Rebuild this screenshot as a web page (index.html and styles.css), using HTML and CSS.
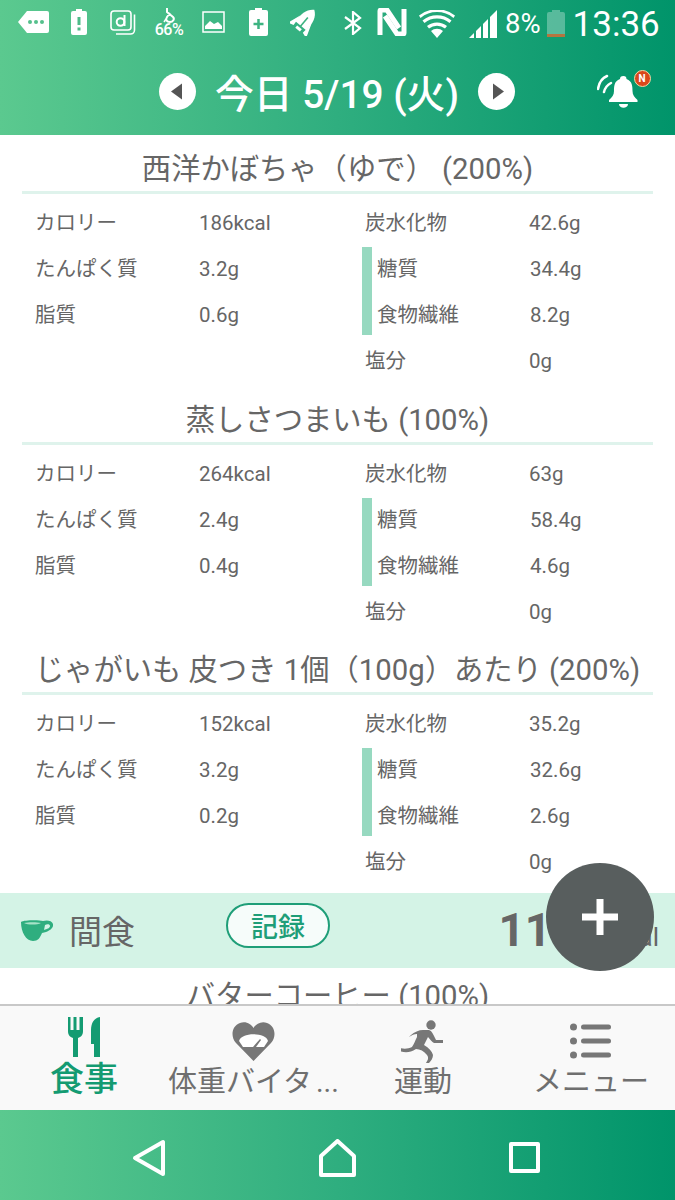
FILE: index.html
```html
<!DOCTYPE html>
<html lang="ja">
<head>
  <meta charset="UTF-8" />
  <meta name="viewport" content="width=device-width, initial-scale=1.0">
  <title>今日 5/19 (火)</title>
  <link rel="stylesheet" href="styles.css">
</head>
<body>

  <header class="top">
    <div class="status">
      <svg class="st st-tag" viewBox="0 0 31 24"><path d="M9 1h20a2 2 0 0 1 2 2v18a2 2 0 0 1-2 2H9L0 12z" fill="#fff"/><circle cx="12" cy="12" r="2" fill="#55c08c"/><circle cx="18" cy="12" r="2" fill="#55c08c"/><circle cx="24" cy="12" r="2" fill="#55c08c"/></svg>
      <svg class="st st-alert" viewBox="0 0 16 26"><path d="M5 0h6v2h3a2 2 0 0 1 2 2v20a2 2 0 0 1-2 2H2a2 2 0 0 1-2-2V4a2 2 0 0 1 2-2h3z" fill="#fff"/><rect x="6.5" y="8" width="3" height="8" fill="#4dbb88"/><rect x="6.5" y="18.5" width="3" height="3" fill="#4dbb88"/></svg>
      <svg class="st st-d" viewBox="0 0 26 25" fill="none" stroke="#fff"><rect x="1" y="1" width="20" height="19" rx="3" stroke-width="1.6"/><path d="M24.5 4.5V20a4 4 0 0 1-4 4H6" stroke-width="1.6"/><circle cx="10.5" cy="12" r="3.8" stroke-width="2"/><path d="M14.5 5v11" stroke-width="2"/></svg>
      <div class="st-usage">
        <svg viewBox="0 0 13 15" fill="none" stroke="#fff" stroke-width="2"><path d="M4 0v4l6 5c2 2 0 5-3 5s-5-2-3-5l3-4"/><path d="M1 14l2-3" stroke-width="1.5"/></svg>
        <span>66%</span>
      </div>
      <svg class="st st-pic" viewBox="0 0 23 22"><rect x="1" y="1" width="21" height="20" fill="none" stroke="#fff" stroke-width="1.5"/><path d="M3 18v-3l5-5 4 3 4-2 4 4v3z" fill="#fff"/></svg>
      <svg class="st st-plus" viewBox="0 0 19 28"><path d="M6 0h7v2h4a2 2 0 0 1 2 2v22a2 2 0 0 1-2 2H2a2 2 0 0 1-2-2V4a2 2 0 0 1 2-2h4z" fill="#fff"/><path d="M9.5 11v10M4.5 16h10" stroke="#3db381" stroke-width="2.5"/></svg>
      <svg class="st st-rocket" viewBox="0 0 28 28"><g transform="rotate(40 14 14)"><path d="M14-2c6 4 8 11 7 21H7C6 9 8 2 14-2z" fill="#fff"/><path d="M7 11L2 25l6-2zM21 11l5 14-6-2z" fill="#fff"/><path d="M14 8v17" stroke="#3db381" stroke-width="1.6"/><path d="M11 21h6v3h-6z" fill="#fff"/></g></svg>
      <svg class="st st-bt" viewBox="0 0 18 24" fill="none" stroke="#fff" stroke-width="2.2"><path d="M1 6l15 11-7 6V1l7 6L1 18"/></svg>
      <svg class="st st-nfc" viewBox="0 0 30 28" fill="none" stroke="#fff" stroke-width="5"><path d="M3 27V3a1 1 0 0 1 1-1h6l12 18"/><path d="M27 1v24a1 1 0 0 1-1 1h-6L8 8"/></svg>
      <svg class="st st-wifi" viewBox="0 0 36 28" fill="#fff"><path d="M18 28l-6-7a9 9 0 0 1 12 0z"/><path d="M10 18.5a13 13 0 0 1 16 0l2-2.5a16 16 0 0 0-20 0z"/><path d="M5.5 13a20 20 0 0 1 25 0l2-2.5a23 23 0 0 0-29 0z"/><path d="M1.5 8a26 26 0 0 1 33 0L36 5.5a29 29 0 0 0-36 0z"/></svg>
      <svg class="st st-signal" viewBox="0 0 28 28" fill="#fff"><path d="M0 28l5-5v5z"/><path d="M7 21l5-5v12H7z"/><path d="M14 14l5-5v19h-5z"/><path d="M21 7l7-7v28h-7z"/></svg>
      <span class="st-pct">8%</span>
      <svg class="st st-batt" viewBox="0 0 18 27"><path d="M5 0h8v2h3a2 2 0 0 1 2 2v23H0V4a2 2 0 0 1 2-2h3z" fill="#fff" fill-opacity=".3"/><rect y="24" width="18" height="3" fill="#b5753f"/></svg>
      <span class="st-time">13:36</span>
    </div>

    <div class="date-row">
      <button class="round-btn"><svg viewBox="0 0 37 37"><path d="M12 18.5l11-8v16z" fill="#555"/></svg></button>
      <h1>今日 5/19 (火)</h1>
      <button class="round-btn"><svg viewBox="0 0 37 37"><path d="M26 18.5l-11-8v16z" fill="#555"/></svg></button>
      <div class="bell">
        <svg viewBox="0 0 46 40" fill="none">
          <path d="M1 17C2 11 5 6 10 4M7 20C8 16 10 13 14 11" stroke="#fff" stroke-width="2.5" stroke-linecap="round"/>
          <path d="M26.5 4c2 0 3 1 3 3 6 2 6 8 6 12 0 4 2 6 5 9v2H12v-2c3-3 5-5 5-9 0-4 0-10 6-12 0-2 1-3 3.5-3z" fill="#fff"/>
          <path d="M22 32h9c0 5-9 5-9 0z" fill="#fff"/>
        </svg>
        <span class="bell-badge">N</span>
      </div>
    </div>
  </header>

  <main class="content">

    <section class="food">
      <h2>西洋かぼちゃ（ゆで） (200%)</h2>
      <div class="facts">
        <div class="col col-left">
          <div class="fact"><span class="name">カロリー</span><span>186kcal</span></div>
          <div class="fact"><span class="name">たんぱく質</span><span>3.2g</span></div>
          <div class="fact"><span class="name">脂質</span><span>0.6g</span></div>
        </div>
        <div class="col">
          <div class="fact"><span class="name">炭水化物</span><span>42.6g</span></div>
          <div class="sub-group">
            <div class="fact"><span class="name">糖質</span><span>34.4g</span></div>
            <div class="fact"><span class="name">食物繊維</span><span>8.2g</span></div>
          </div>
          <div class="fact"><span class="name">塩分</span><span>0g</span></div>
        </div>
      </div>
    </section>

    <section class="food">
      <h2>蒸しさつまいも (100%)</h2>
      <div class="facts">
        <div class="col col-left">
          <div class="fact"><span class="name">カロリー</span><span>264kcal</span></div>
          <div class="fact"><span class="name">たんぱく質</span><span>2.4g</span></div>
          <div class="fact"><span class="name">脂質</span><span>0.4g</span></div>
        </div>
        <div class="col">
          <div class="fact"><span class="name">炭水化物</span><span>63g</span></div>
          <div class="sub-group">
            <div class="fact"><span class="name">糖質</span><span>58.4g</span></div>
            <div class="fact"><span class="name">食物繊維</span><span>4.6g</span></div>
          </div>
          <div class="fact"><span class="name">塩分</span><span>0g</span></div>
        </div>
      </div>
    </section>

    <section class="food">
      <h2>じゃがいも 皮つき 1個（100g）あたり (200%)</h2>
      <div class="facts">
        <div class="col col-left">
          <div class="fact"><span class="name">カロリー</span><span>152kcal</span></div>
          <div class="fact"><span class="name">たんぱく質</span><span>3.2g</span></div>
          <div class="fact"><span class="name">脂質</span><span>0.2g</span></div>
        </div>
        <div class="col">
          <div class="fact"><span class="name">炭水化物</span><span>35.2g</span></div>
          <div class="sub-group">
            <div class="fact"><span class="name">糖質</span><span>32.6g</span></div>
            <div class="fact"><span class="name">食物繊維</span><span>2.6g</span></div>
          </div>
          <div class="fact"><span class="name">塩分</span><span>0g</span></div>
        </div>
      </div>
    </section>

    <div class="meal-bar">
      <svg class="cup" viewBox="0 0 32 21"><path d="M0 2c3-2 18-2 22-1 3-1 9-1 10 3s-4 8-11 9c-2 5-4 8-9 8-7 0-12-9-12-19z" fill="#2fae7f"/><path d="M3 3c4-1 13-1 17 0-4 2-13 2-17 0z" fill="#a8e2c8"/><path d="M24 5c2-1 5-1 5 1s-3 3-6 4z" fill="#d4f3e6"/></svg>
      <span class="meal-name">間食</span>
      <button class="record-btn">記録</button>
      <div class="meal-total"><strong>1160</strong><span>kcal</span></div>
    </div>

    <section class="food">
      <h2>バターコーヒー (100%)</h2>
    </section>
  </main>

  <button class="fab"><svg viewBox="0 0 36 36"><path d="M18 0v36M0 18h36" stroke="#fff" stroke-width="7"/></svg></button>

  <nav class="tabs">
    <div class="tab tab-on">
      <svg viewBox="0 0 44 44" fill="#149b72"><path d="M6 0h2.5v13h3V0h3v13h3V0H21v14c0 4-2 6-5 7v19h-5V21c-3-1-5-3-5-7z"/><path d="M38 0v40h-6V27h-3V13c0-7 3-12 9-13z"/></svg>
      <span>食事</span>
    </div>
    <div class="tab">
      <svg viewBox="0 0 44 44"><g transform="translate(1 5)"><path d="M21.5 39L4 21C-2 14 0 4 8 1c6-2 11 1 13.5 5C24 2 29-1 35 1c8 3 10 13 4 20z" fill="#777"/><path d="M7 19c2-9 27-9 29 0l-4 6H11z" fill="#fff"/><path d="M21 25l7-8 1 1-5 7z" fill="#777"/></g></svg>
      <span>体重バイタ<i class="dots">...</i></span>
    </div>
    <div class="tab">
      <svg viewBox="0 0 44 48" class="runner" fill="#777"><circle cx="30" cy="8" r="4.7"/><path d="M10 18c3-3 8-5 12-5h6c3 1 4 4 6 8l1 2h7v3h-9c-2-1-4-4-6-6l-4 8c5 3 8 6 9 10 0 3-2 6-4 8h-3c2-3 3-5 1-8-3-4-7-6-11-6-6 4-11 4-17 2v-3c5 1 9 1 13-1 2-3 3-6 5-10v-3c-3 0-5 1-8 3z"/></svg>
      <span>運動</span>
    </div>
    <div class="tab">
      <svg viewBox="0 0 44 44" fill="#777"><circle cx="4.5" cy="10" r="3.5"/><circle cx="4.5" cy="24" r="3.5"/><circle cx="4.5" cy="38" r="3.5"/><rect x="12" y="7.5" width="30" height="5" rx="2.5"/><rect x="12" y="21.5" width="30" height="5" rx="2.5"/><rect x="12" y="35.5" width="30" height="5" rx="2.5"/></svg>
      <span>メニュー</span>
    </div>
  </nav>

  <footer class="sysnav">
    <svg class="nav-back" viewBox="0 0 34 38" fill="none" stroke="#fff" stroke-width="4" stroke-linejoin="round"><path d="M31 3v32L3 19z"/></svg>
    <svg class="nav-home" viewBox="0 0 37 38" fill="none" stroke="#fff" stroke-width="4" stroke-linejoin="round"><path d="M2 36V17L18.5 2 35 17v19z"/></svg>
    <svg class="nav-square" viewBox="0 0 31 31" fill="none" stroke="#fff" stroke-width="4" stroke-linejoin="round"><rect x="2" y="2" width="27" height="27"/></svg>
  </footer>

</body>
</html>
```

FILE: styles.css
```css
* {
  box-sizing: border-box;
}
body {
  font-family: Roboto, 'Noto Sans CJK JP', sans-serif;
  margin: 0;
  height: 1200px;
  display: flex;
  flex-direction: column;
  position: relative;
  overflow: hidden;
  background: #fff;
  color: #666;
}
button {
  font-family: inherit;
  padding: 0;
  border: none;
  cursor: pointer;
}

/* top green area */
.top {
  height: 135px;
  flex: none;
  color: #fff;
  background: linear-gradient(90deg, #5bc98f, #2fae7f 50%, #00946a);
}
.status {
  height: 47px;
  padding: 8px 0 0 18px;
  display: flex;
  align-items: flex-start;
}
.st {
  display: block;
  flex: none;
}
.st-tag { width: 31px; height: 24px; margin-top: 2px; }
.st-alert { width: 16px; height: 26px; margin: 1px 0 0 22px; }
.st-d { width: 26px; height: 25px; margin: 2px 0 0 23px; }
.st-usage {
  width: 30px;
  margin-left: 18px;
  text-align: center;
  font-size: 16px;
  font-weight: 500;
  letter-spacing: -0.5px;
  line-height: 13px;
}
.st-usage svg {
  display: block;
  width: 13px;
  height: 15px;
  margin: 0 auto;
}
.st-usage span {
  display: block;
}
.st-pic { width: 23px; height: 22px; margin: 3px 0 0 18px; }
.st-plus { width: 19px; height: 28px; margin-left: 24px; }
.st-rocket { width: 28px; height: 28px; margin-left: 22px; }
.st-bt { width: 18px; height: 24px; margin: 3px 0 0 26px; }
.st-nfc { width: 30px; height: 28px; margin-left: 15px; }
.st-wifi { width: 36px; height: 28px; margin: 2px 0 0 12px; }
.st-signal { width: 28px; height: 28px; margin: 2px 0 0 14px; }
.st-pct {
  margin-left: 8px;
  font-size: 27.5px;
  line-height: 32px;
}
.st-batt { width: 18px; height: 27px; margin: 2px 0 0 6px; }
.st-time {
  margin-left: 8px;
  font-size: 35px;
  line-height: 34px;
}

.date-row {
  height: 88px;
  position: relative;
  display: flex;
  align-items: center;
  justify-content: center;
  gap: 19px;
  padding-right: 1px;
}
.date-row h1 {
  margin: 0;
  font-size: 38.8px;
  font-weight: 500;
}
.round-btn {
  width: 37px;
  height: 37px;
  border-radius: 50%;
  background: #fff;
}
.round-btn svg {
  display: block;
}
.bell {
  position: absolute;
  left: 597px;
  top: 25px;
  width: 46px;
  height: 40px;
}
.bell svg {
  display: block;
}
.bell-badge {
  position: absolute;
  left: 36.5px;
  top: -2.5px;
  width: 17px;
  height: 17px;
  border-radius: 50%;
  border: 1px solid #f3d9a8;
  background: #d9481c;
  color: #fff;
  font-size: 10px;
  font-weight: 700;
  line-height: 15px;
  text-align: center;
}

/* food list */
.content {
  flex: 1;
  min-height: 0;
  padding-top: 6px;
  overflow: hidden;
}
.food {
  margin: 0 22px 7.5px;
}
.food h2 {
  margin: 0;
  height: 53px;
  padding-top: 6px;
  border-bottom: 3px solid #dff3ec;
  font-size: 29.3px;
  font-weight: 400;
  line-height: 44px;
  text-align: center;
  white-space: nowrap;
}
.facts {
  display: flex;
  padding: 6px 0 0 13px;
  font-size: 20.5px;
}
.col-left {
  width: 330px;
}
.fact {
  height: 46px;
  line-height: 46px;
  display: flex;
  align-items: baseline;
}
.name {
  width: 164px;
  flex: none;
}
.sub-group {
  position: relative;
}
.sub-group::before {
  content: "";
  position: absolute;
  left: -3px;
  top: 1px;
  width: 10px;
  height: 88px;
  background: #97d9c0;
}
.sub-group .name {
  padding-left: 12px;
  width: 165px;
}

/* snack header */
.meal-bar {
  height: 75px;
  display: flex;
  align-items: center;
  padding: 0 16px 0 21px;
  background: #d4f3e6;
}
.cup {
  width: 32px;
  height: 21px;
}
.meal-name {
  margin-left: 16px;
  font-size: 33px;
}
.record-btn {
  width: 104px;
  height: 45px;
  margin: 0 0 9px 91px;
  padding-top: 5px;
  border: 2px solid #1f9e78;
  border-radius: 23px;
  background: #f6fcfa;
  color: #1f9e78;
  font-size: 27px;
  font-weight: 500;
  line-height: 34px;
}
.meal-total {
  margin-left: auto;
  display: flex;
  align-items: baseline;
}
.meal-total strong {
  font-size: 46px;
  font-weight: 700;
}
.meal-total span {
  margin-left: 8px;
  font-size: 26px;
}

.fab {
  position: absolute;
  left: 546px;
  top: 863px;
  width: 108px;
  height: 108px;
  border-radius: 50%;
  background: #585e5e;
  display: flex;
  align-items: center;
  justify-content: center;
}
.fab svg {
  width: 36px;
  height: 36px;
}

/* bottom tabs */
.tabs {
  height: 106px;
  flex: none;
  display: grid;
  grid-template-columns: repeat(4, 1fr);
  background: #f9f9f9;
  border-top: 2px solid #c8c8c8;
}
.tab {
  display: flex;
  flex-direction: column;
  align-items: center;
  color: #6f6f6f;
  font-size: 29px;
  white-space: nowrap;
  line-height: 38px;
}
.tab svg {
  height: 44px;
  width: 44px;
  margin-top: 11px;
}
.tab svg.runner {
  height: 48px;
}
.tab span {
  margin-top: 2px;
}
.tab svg.runner + span {
  margin-top: -2px;
}
.tab-on {
  color: #149b72;
  font-size: 34px;
  font-weight: 500;
}
.tab-on span {
  margin-top: -1px;
}
.dots {
  font-style: normal;
  margin-left: 4px;
}

/* android nav bar */
.sysnav {
  height: 90px;
  flex: none;
  display: flex;
  align-items: center;
  justify-content: center;
  gap: 153px;
  padding: 5px 3px 0 0;
  background: linear-gradient(90deg, #5bc98f, #2fae7f 50%, #00946a);
}
.nav-back { width: 34px; height: 38px; }
.nav-home { width: 37px; height: 38px; }
.nav-square { width: 31px; height: 31px; }
```
